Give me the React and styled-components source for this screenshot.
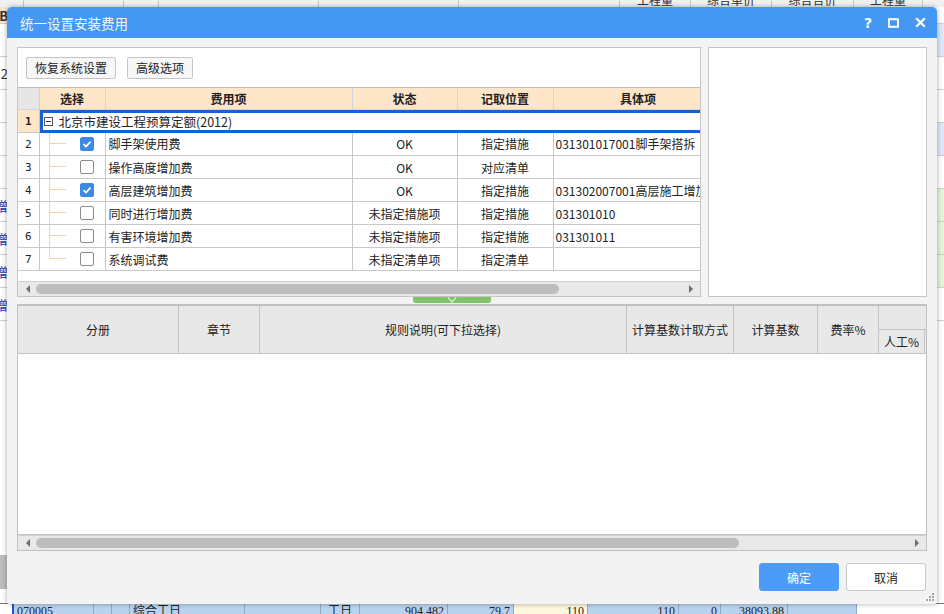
import React from 'react';
import styled, { createGlobalStyle } from 'styled-components';

const GlobalStyle = createGlobalStyle`
  html, body {
    margin: 0;
    padding: 0;
  }
  body {
    font-family: "Noto Sans CJK SC", "Noto Sans", sans-serif;
    font-size: 12px;
    color: #222;
  }
`;

const feeRows = [
  { no: 2, checked: true, name: '脚手架使用费', state: 'OK', place: '指定措施', item: '031301017001脚手架搭拆' },
  { no: 3, checked: false, name: '操作高度增加费', state: 'OK', place: '对应清单', item: '' },
  { no: 4, checked: true, name: '高层建筑增加费', state: 'OK', place: '指定措施', item: '031302007001高层施工增加' },
  { no: 5, checked: false, name: '同时进行增加费', state: '未指定措施项', place: '指定措施', item: '031301010' },
  { no: 6, checked: false, name: '有害环境增加费', state: '未指定措施项', place: '指定措施', item: '031301011' },
  { no: 7, checked: false, name: '系统调试费', state: '未指定清单项', place: '指定清单', item: '' },
];

const sheetRows = [
  { h: 17, left: 'B', head: true, right: '#ffffff' },
  { h: 33, left: '', right: '#dfe8f7' },
  { h: 33, left: '2', right: '#ffffff' },
  { h: 33, left: '', right: '#ffffff' },
  { h: 33, left: '', right: '#dfe8f7' },
  { h: 33, left: '', right: '#ffffff' },
  { h: 33, left: '增', blue: true, right: '#e2f5da' },
  { h: 33, left: '增', blue: true, right: '#e2f5da' },
  { h: 33, left: '增', blue: true, right: '#e2f5da' },
  { h: 33, left: '增', blue: true, right: '#ffffff' },
];

const headCells = [
  { w: 24 }, { w: 100 }, { w: 35 }, { w: 160 }, { w: 140 }, { w: 161 },
  { w: 71, text: '工程量' },
  { w: 81, text: '综合单价' },
  { w: 82, text: '综合合价' },
  { w: 69, text: '工程量' },
  { w: 40 },
];

const bottomCells = [
  { w: 82, text: '070005', align: 'left' },
  { w: 18, text: '' },
  { w: 18, text: '' },
  { w: 115, text: '综合工日', align: 'left' },
  { w: 76, text: '' },
  { w: 39, text: '工日' },
  { w: 88, text: '904.482', align: 'right' },
  { w: 66, text: '79.7', align: 'right' },
  { w: 74, text: '110', align: 'right', tint: '#fdf7e0' },
  { w: 91, text: '110', align: 'right' },
  { w: 42, text: '0', align: 'right' },
  { w: 67, text: '38093.88', align: 'right' },
  { w: 69, text: '' },
];

function Checkbox({ checked }) {
  return (
    <CheckBox $checked={checked}>
      {checked && (
        <svg width="10" height="10" viewBox="0 0 10 10">
          <path d="M1.5 5.2 L4 7.5 L8.6 2.6" fill="none" stroke="#fff" strokeWidth="1.8" />
        </svg>
      )}
    </CheckBox>
  );
}

function HScroll({ thumb }) {
  return (
    <ScrollTrack>
      <svg width="6" height="8" viewBox="0 0 6 8">
        <path d="M5 0 L1 4 L5 8 Z" fill="#6e6e6e" />
      </svg>
      <ScrollThumb style={{ width: thumb }} />
      <ScrollGap />
      <svg width="6" height="8" viewBox="0 0 6 8">
        <path d="M1 0 L5 4 L1 8 Z" fill="#6e6e6e" />
      </svg>
    </ScrollTrack>
  );
}

export default function App() {
  return (
    <Page>
      <GlobalStyle />
      <Sheet>
        <SheetHeader>
          {headCells.map((c, i) => (
            <HeadCell key={i} $w={c.w}>
              {c.text && <span>{c.text}</span>}
            </HeadCell>
          ))}
        </SheetHeader>
        {sheetRows.map((r, i) => (
          <SheetRow key={i} style={{ height: r.h }}>
            <SideCell $head={r.head} $blue={r.blue}>{r.left}</SideCell>
            <SheetFill />
            <SideCell $tint={r.right} />
          </SheetRow>
        ))}
        <SheetRest />
        <SheetSelected>
          {bottomCells.map((c, i) => (
            <SelCell key={i} $align={c.align} $tint={c.tint} style={{ width: c.w }}>
              {c.text}
            </SelCell>
          ))}
        </SheetSelected>
      </Sheet>

      <Dialog>
        <TitleBar>
          <Title>统一设置安装费用</Title>
          <TitleIcons>
            <HelpMark>?</HelpMark>
            <svg width="11" height="10" viewBox="0 0 11 10">
              <rect x="1" y="1.2" width="9" height="7.6" fill="none" stroke="#fff" strokeWidth="2" />
            </svg>
            <svg width="11" height="11" viewBox="0 0 11 11">
              <path d="M1.2 1.2 L9.8 9.8 M9.8 1.2 L1.2 9.8" stroke="#fff" strokeWidth="2.3" />
            </svg>
          </TitleIcons>
        </TitleBar>

        <Body>
          <TopArea>
            <LeftPanel>
              <Toolbar>
                <ToolButton>恢复系统设置</ToolButton>
                <ToolButton>高级选项</ToolButton>
              </Toolbar>
              <GridWrap>
                <Grid>
                  <colgroup>
                    <col style={{ width: 21 }} />
                    <col style={{ width: 66 }} />
                    <col style={{ width: 247 }} />
                    <col style={{ width: 105 }} />
                    <col style={{ width: 96 }} />
                    <col style={{ width: 170 }} />
                  </colgroup>
                  <thead>
                    <tr>
                      <Th $corner />
                      <Th>选择</Th>
                      <Th>费用项</Th>
                      <Th>状态</Th>
                      <Th>记取位置</Th>
                      <Th>具体项</Th>
                    </tr>
                  </thead>
                  <tbody>
                    <tr>
                      <RowNo $active>1</RowNo>
                      <GroupCell colSpan={5}>
                        <GroupLabel>
                          <Minus />
                          北京市建设工程预算定额(2012)
                        </GroupLabel>
                      </GroupCell>
                    </tr>
                    {feeRows.map((r, i) => (
                      <tr key={r.no}>
                        <RowNo>{r.no}</RowNo>
                        <Td>
                          <SelectCell>
                            <Guide $last={i === feeRows.length - 1} />
                            <Checkbox checked={r.checked} />
                          </SelectCell>
                        </Td>
                        <Td $pad="3px">{r.name}</Td>
                        <Td $align="center">{r.state}</Td>
                        <Td $align="center">{r.place}</Td>
                        <Td $pad="2px">{r.item}</Td>
                      </tr>
                    ))}
                  </tbody>
                </Grid>
              </GridWrap>
              <HScroll thumb={523} />
            </LeftPanel>
            <RightPanel />
          </TopArea>

          <Splitter>
            <SplitHandle>
              <svg width="10" height="6" viewBox="0 0 10 6">
                <path d="M1 0.5 L5 5 L9 0.5" fill="none" stroke="#d8f0cf" strokeWidth="1.2" />
              </svg>
            </SplitHandle>
          </Splitter>

          <BottomPanel>
            <RuleHead>
              <RuleTh $w={161}>分册</RuleTh>
              <RuleTh $w={81}>章节</RuleTh>
              <RuleTh $w={367}>规则说明(可下拉选择)</RuleTh>
              <RuleTh $w={107}>计算基数计取方式</RuleTh>
              <RuleTh $w={84}>计算基数</RuleTh>
              <RuleTh $w={61}>费率%</RuleTh>
              <RuleGroup>
                <RuleGroupTop />
                <RuleGroupBottom>
                  <RuleSub>人工%</RuleSub>
                  <RuleSub />
                </RuleGroupBottom>
              </RuleGroup>
            </RuleHead>
            <RuleBody />
            <HScroll thumb={703} />
          </BottomPanel>

          <Footer>
            <PrimaryButton>确定</PrimaryButton>
            <PlainButton>取消</PlainButton>
          </Footer>
        </Body>
        <Grip>
          <svg width="8" height="8" viewBox="0 0 8 8" fill="#a8a8a8">
            <rect x="6" y="0" width="2" height="2" />
            <rect x="3" y="3" width="2" height="2" />
            <rect x="6" y="3" width="2" height="2" />
            <rect x="0" y="6" width="2" height="2" />
            <rect x="3" y="6" width="2" height="2" />
            <rect x="6" y="6" width="2" height="2" />
          </svg>
        </Grip>
      </Dialog>
    </Page>
  );
}

const Page = styled.div`
  position: relative;
  width: 944px;
  height: 614px;
  overflow: hidden;
  background: #fff;
`;

/* ---------- application behind the dialog ---------- */

const Sheet = styled.div`
  display: flex;
  flex-direction: column;
  height: 100%;
  font-family: "Liberation Serif", "Noto Sans CJK SC", serif;
`;

const SheetHeader = styled.div`
  display: flex;
  height: 7px;
  flex: none;
  background: #f1f1f1;
  overflow: hidden;
`;

const HeadCell = styled.div`
  width: ${(p) => p.$w}px;
  flex: none;
  box-sizing: border-box;
  border-right: 1px solid #c9c9c9;
  display: flex;
  align-items: flex-end;
  justify-content: center;
  overflow: hidden;
  span {
    display: block;
    line-height: 14px;
    height: 14px;
    font-size: 12px;
    color: #333;
    font-family: "Noto Sans CJK SC", sans-serif;
  }
`;

const SheetRow = styled.div`
  display: flex;
  flex: none;
`;

const SideCell = styled.div`
  width: 24px;
  flex: none;
  box-sizing: border-box;
  border-bottom: 1px solid #cfcfcf;
  background: ${(p) => (p.$head ? '#fbe6c9' : p.$tint || '#fff')};
  color: ${(p) => (p.$blue ? '#1a2fb0' : '#333')};
  font-weight: ${(p) => (p.$head ? 700 : 400)};
  font-size: 13px;
  display: flex;
  align-items: center;
  justify-content: flex-end;
  padding-right: 16px;
  font-family: "Noto Sans CJK SC", sans-serif;
`;

const SheetFill = styled.div`
  flex: 1;
`;

const SheetRest = styled.div`
  flex: 1;
  display: flex;
  flex-direction: column;
  justify-content: flex-end;
  padding-bottom: 14px;
  &::before {
    content: '';
    width: 7px;
    height: 34px;
    background: #bdbdbd;
  }
`;

const SheetSelected = styled.div`
  display: flex;
  height: 10px;
  flex: none;
  overflow: hidden;
  padding-left: 12px;
  border-top: 1px solid #777;
`;

const SelCell = styled.div`
  flex: none;
  box-sizing: border-box;
  background: ${(p) => p.$tint || '#b9d3ee'};
  border-right: 1px solid #8fa9c6;
  text-align: ${(p) => p.$align || 'center'};
  padding: 0 3px;
  font-size: 12px;
  line-height: 14px;
  color: #222;
  white-space: nowrap;
  &:first-child {
    border-left: 2px solid #2255cc;
  }
`;

/* ---------- dialog ---------- */

const Dialog = styled.div`
  position: absolute;
  left: 7px;
  top: 7px;
  width: 930px;
  height: 597px;
  display: flex;
  flex-direction: column;
  background: #f3f3f3;
  border-radius: 5px 5px 2px 2px;
  box-shadow: 0 0 5px rgba(0, 0, 0, 0.35);
  overflow: hidden;
`;

const TitleBar = styled.div`
  height: 31px;
  flex: none;
  background: #4597f4;
  display: flex;
  align-items: center;
  justify-content: space-between;
  padding: 0 11px 0 13px;
`;

const Title = styled.div`
  font-size: 13.5px;
  color: #f2f7fe;
  font-family: "Noto Sans CJK SC", sans-serif;
`;

const TitleIcons = styled.div`
  display: flex;
  align-items: center;
  gap: 16px;
`;

const HelpMark = styled.span`
  color: #fff;
  font-weight: 700;
  font-size: 14px;
  font-family: "DejaVu Sans", sans-serif;
  line-height: 1;
`;

const Body = styled.div`
  flex: 1;
  display: flex;
  flex-direction: column;
  padding: 9px 10px 0 10px;
`;

const TopArea = styled.div`
  display: flex;
  gap: 7px;
  height: 250px;
  flex: none;
`;

const LeftPanel = styled.div`
  width: 684px;
  flex: none;
  box-sizing: border-box;
  border: 1px solid #c6c6c6;
  background: #fff;
  display: flex;
  flex-direction: column;
`;

const Toolbar = styled.div`
  display: flex;
  gap: 11px;
  padding: 9px 8px 8px;
  flex: none;
`;

const ToolButton = styled.button`
  height: 22px;
  padding: 0 8px;
  border: 1px solid #c4c4c4;
  border-radius: 2px;
  background: #f7f7f7;
  font-family: "Noto Sans CJK SC", sans-serif;
  font-size: 12px;
  color: #222;
  line-height: 20px;
`;

const GridWrap = styled.div`
  flex: 1;
  overflow: hidden;
  border-top: 1px solid #bcbcbc;
`;

const Grid = styled.table`
  table-layout: fixed;
  border-collapse: collapse;
  width: 705px;
  font-family: "Noto Sans CJK SC", sans-serif;
  font-size: 12px;
`;

const Th = styled.th`
  height: 21px;
  padding: 0;
  background: ${(p) => (p.$corner ? '#e6e6e6' : '#fde5c8')};
  border-right: 1px solid #d4d4d4;
  border-bottom: 1px solid #d4d4d4;
  font-weight: 700;
  color: #222;
  text-align: center;
`;

const RowNo = styled.td`
  height: 22px;
  padding: 0;
  text-align: center;
  background: ${(p) => (p.$active ? '#fde5c8' : '#fff')};
  font-weight: ${(p) => (p.$active ? 700 : 400)};
  border-right: 1px solid #c8c8c8;
  border-bottom: 1px solid #c8c8c8;
  font-family: "DejaVu Sans Mono", monospace;
  font-size: 11px;
`;

const GroupCell = styled.td`
  padding: 0;
  height: 22px;
  box-shadow: inset 0 0 0 3px #1462d8;
`;

const GroupLabel = styled.div`
  display: flex;
  align-items: center;
  gap: 6px;
  padding-left: 4px;
  font-size: 12.5px;
  white-space: nowrap;
`;

const Minus = styled.span`
  width: 9px;
  height: 9px;
  box-sizing: border-box;
  border: 1px solid #555;
  display: flex;
  align-items: center;
  justify-content: center;
  &::after {
    content: '';
    width: 5px;
    height: 1px;
    background: #333;
  }
`;

const Td = styled.td`
  height: 22px;
  padding: 0 ${(p) => p.$pad || '0'};
  text-align: ${(p) => p.$align || 'left'};
  border-right: 1px solid #c8c8c8;
  border-bottom: 1px solid #c8c8c8;
  white-space: nowrap;
  overflow: hidden;
  font-size: 12px;
  color: #222;
`;

const SelectCell = styled.div`
  display: flex;
  align-items: center;
  height: 22px;
  padding-left: 9px;
`;

const Guide = styled.span`
  position: relative;
  align-self: flex-start;
  width: 16px;
  height: ${(p) => (p.$last ? '12px' : '23px')};
  box-sizing: border-box;
  border-left: 1px solid #f1d7a6;
  margin-top: -1px;
  margin-right: 15px;
  &::after {
    content: '';
    position: absolute;
    left: 0;
    top: 11px;
    width: 16px;
    height: 1px;
    background: #f1d7a6;
  }
`;

const CheckBox = styled.span`
  width: 14px;
  height: 14px;
  box-sizing: border-box;
  border-radius: 2px;
  border: 1px solid ${(p) => (p.$checked ? '#3a8ae6' : '#8d8d8d')};
  background: ${(p) => (p.$checked ? '#3a8ae6' : '#fff')};
  display: flex;
  align-items: center;
  justify-content: center;
`;

const ScrollTrack = styled.div`
  height: 14px;
  flex: none;
  display: flex;
  align-items: center;
  gap: 5px;
  padding: 0 6px 0 7px;
  background: #e9e9e9;
  border-top: 1px solid #cfcfcf;
`;

const ScrollThumb = styled.div`
  height: 10px;
  border-radius: 5px;
  background: #bdbdbd;
  flex: none;
`;

const ScrollGap = styled.div`
  flex: 1;
`;

const RightPanel = styled.div`
  flex: 1;
  border: 1px solid #c6c6c6;
  background: #fff;
`;

const Splitter = styled.div`
  height: 7px;
  flex: none;
  display: flex;
  align-items: flex-start;
`;

const SplitHandle = styled.div`
  margin-left: 396px;
  width: 78px;
  height: 6px;
  border-radius: 0 0 3px 3px;
  background: #7fc46a;
  display: flex;
  justify-content: center;
`;

const BottomPanel = styled.div`
  height: 247px;
  flex: none;
  box-sizing: border-box;
  border: 1px solid #c0c0c0;
  border-top: 2px solid #c0c0c0;
  background: #fff;
  display: flex;
  flex-direction: column;
  overflow: hidden;
`;

const RuleHead = styled.div`
  display: flex;
  height: 47px;
  flex: none;
  background: #e8e8e8;
  border-bottom: 1px solid #c4c4c4;
`;

const RuleTh = styled.div`
  width: ${(p) => p.$w}px;
  flex: none;
  box-sizing: border-box;
  border-right: 1px solid #c4c4c4;
  display: flex;
  align-items: center;
  justify-content: center;
  font-size: 12px;
  color: #222;
  white-space: nowrap;
`;

const RuleGroup = styled.div`
  flex: 1;
  display: flex;
  flex-direction: column;
`;

const RuleGroupTop = styled.div`
  flex: 1;
  border-bottom: 1px solid #c4c4c4;
`;

const RuleGroupBottom = styled.div`
  height: 23px;
  display: flex;
`;

const RuleSub = styled.div`
  width: 46px;
  flex: none;
  box-sizing: border-box;
  border-right: 1px solid #c4c4c4;
  display: flex;
  align-items: center;
  justify-content: center;
  font-size: 12px;
`;

const RuleBody = styled.div`
  flex: 1;
  border-bottom: 1px solid #c4c4c4;
`;

const Footer = styled.div`
  display: flex;
  justify-content: flex-end;
  gap: 7px;
  padding: 12px 1px 0 0;
`;

const PrimaryButton = styled.button`
  width: 80px;
  height: 28px;
  border: 1px solid #4a9cf6;
  border-radius: 3px;
  background: #4a9cf6;
  color: #fff;
  font-family: "Noto Sans CJK SC", sans-serif;
  font-size: 12px;
`;

const PlainButton = styled.button`
  width: 80px;
  height: 28px;
  border: 1px solid #c8c8c8;
  border-radius: 3px;
  background: #fff;
  color: #222;
  font-family: "Noto Sans CJK SC", sans-serif;
  font-size: 12px;
`;

const Grip = styled.div`
  position: absolute;
  right: 3px;
  bottom: 3px;
  display: flex;
`;
